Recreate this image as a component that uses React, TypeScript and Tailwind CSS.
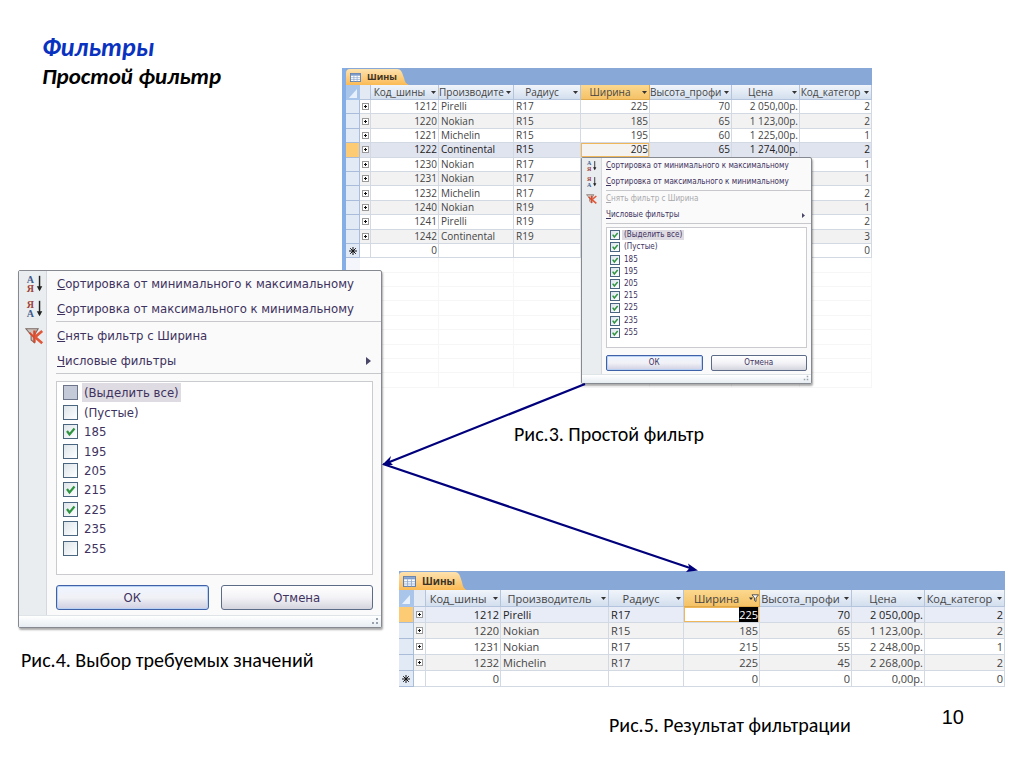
import React from "react";
import clsx from "clsx";

type Tire = {
  id: string;
  maker: string;
  radius: string;
  width: string;
  profile: string;
  price: string;
  category: string;
};

type Size = "small" | "large";

const allTires: Tire[] = [
  { id: "1212", maker: "Pirelli", radius: "R17", width: "225", profile: "70", price: "2 050,00р.", category: "2" },
  { id: "1220", maker: "Nokian", radius: "R15", width: "185", profile: "65", price: "1 123,00р.", category: "2" },
  { id: "1221", maker: "Michelin", radius: "R15", width: "195", profile: "60", price: "1 225,00р.", category: "1" },
  { id: "1222", maker: "Continental", radius: "R15", width: "205", profile: "65", price: "1 274,00р.", category: "2" },
  { id: "1230", maker: "Nokian", radius: "R17", width: "", profile: "", price: "", category: "1" },
  { id: "1231", maker: "Nokian", radius: "R17", width: "", profile: "", price: "", category: "1" },
  { id: "1232", maker: "Michelin", radius: "R17", width: "", profile: "", price: "", category: "2" },
  { id: "1240", maker: "Nokian", radius: "R19", width: "", profile: "", price: "", category: "1" },
  { id: "1241", maker: "Pirelli", radius: "R19", width: "", profile: "", price: "", category: "2" },
  { id: "1242", maker: "Continental", radius: "R19", width: "", profile: "", price: "", category: "3" },
];

const filteredTires: Tire[] = [
  { id: "1212", maker: "Pirelli", radius: "R17", width: "225", profile: "70", price: "2 050,00р.", category: "2" },
  { id: "1220", maker: "Nokian", radius: "R15", width: "185", profile: "65", price: "1 123,00р.", category: "2" },
  { id: "1231", maker: "Nokian", radius: "R17", width: "215", profile: "55", price: "2 248,00р.", category: "1" },
  { id: "1232", maker: "Michelin", radius: "R17", width: "225", profile: "45", price: "2 268,00р.", category: "2" },
];

const filterValues = ["(Выделить все)", "(Пустые)", "185", "195", "205", "215", "225", "235", "255"];

function TableIcon({ className }: { className: string }) {
  return (
    <svg viewBox="0 0 12 10" className={className} aria-hidden="true">
      <rect x="0.5" y="0.5" width="11" height="9" fill="#fff" stroke="#5f7fae" />
      <rect x="1" y="1" width="10" height="2" fill="#7d9ccb" />
      <path d="M1 5.2h10M1 7.3h10M4.2 3v6.5M7.8 3v6.5" stroke="#8fa9d0" strokeWidth="0.8" />
    </svg>
  );
}

function SortIcon({ top, bottom, className }: { top: "А" | "Я"; bottom: "А" | "Я"; className: string }) {
  const color = (c: string) => (c === "А" ? "#3d5a8c" : "#a0423a");
  return (
    <svg viewBox="0 0 18 22" className={className} aria-hidden="true">
      <text x="0" y="10" fontSize="11" fontWeight="bold" fontFamily="Liberation Serif, serif" fill={color(top)}>{top}</text>
      <text x="0" y="20" fontSize="11" fontWeight="bold" fontFamily="Liberation Serif, serif" fill={color(bottom)}>{bottom}</text>
      <path d="M14 2v15" stroke="#222" strokeWidth="1.6" />
      <path d="M11 13.5h6L14 19z" fill="#222" />
    </svg>
  );
}

function ClearFilterIcon({ className }: { className: string }) {
  return (
    <svg viewBox="0 0 18 16" className={className} aria-hidden="true">
      <path d="M.8 1.500h11L8.500 7v7l-3-2.500V7z" fill="#cfc4bd" stroke="#7b6a64" />
      <path d="M8.500 3v11" stroke="#d9492c" strokeWidth="2.200" />
      <path d="M15.500 3.500L9 9l6.500 5.500" fill="none" stroke="#e0583a" strokeWidth="2.400" />
      <path d="M4 5l4.500 4.500" stroke="#d9492c" strokeWidth="1.800" />
    </svg>
  );
}

function HeaderArrow({ label, filtered }: { label: string; filtered?: boolean }) {
  return (
    <button type="button" aria-label={`Фильтр: ${label}`} className="flex w-2.5 shrink-0 justify-center">
      {filtered ? (
        <svg viewBox="0 0 10 8" className="h-2 w-2.5 shrink-0" aria-hidden="true">
          <path d="M0 3.500h4L2 6z" fill="#333" />
          <path d="M3 .8h6.500L7 4v3.500L5.500 6.500V4z" fill="#fff" stroke="#444" strokeWidth=".9" />
        </svg>
      ) : (
        <svg viewBox="0 0 5 3" className="h-[3px] w-[5px]" aria-hidden="true">
          <path d="M0 0h5L2.500 3z" fill="#333" />
        </svg>
      )}
    </button>
  );
}

const columnWidths: Record<Size, string[]> = {
  small: ["w-[14px]", "w-[11px]", "w-[68px]", "w-[75px]", "w-[67px]", "w-[69px]", "w-[82px]", "w-[68px]", "w-[72px]"],
  large: ["w-[15px]", "w-[12px]", "w-[75px]", "w-[108px]", "w-[75px]", "w-[76px]", "w-[92px]", "w-[73px]", "w-[80px]"],
};

type SheetProps = {
  size: Size;
  rows: Tire[];
  current: number;
  makerTitle: string;
  newRow: string[];
  blankRows?: number;
};

function Sheet({ size, rows, current, makerTitle, newRow, blankRows = 0 }: SheetProps) {
  const large = size === "large";
  const titles = ["Код_шины", makerTitle, "Радиус", "Ширина", "Высота_профи", "Цена", "Код_категор"];
  const cell = "overflow-hidden whitespace-nowrap border-r border-b border-[#d3d9e3] px-px py-0";
  const rowHeight = large ? "h-4" : "h-[14px]";

  return (
    <div className="font-['Open_Sans','Noto_Sans',sans-serif] text-[#444]">
      <div className={clsx("flex items-end bg-[#88a9d7]", large ? "h-[19px]" : "h-[17px]")}>
        <button
          type="button"
          className={clsx(
            "flex items-center rounded-tl bg-linear-to-b from-[#fde2ae] to-[#fbba52] font-bold text-[#3b3325]",
            large ? "h-[18px] gap-1.5 pl-1 text-[10px]" : "h-4 gap-1.5 pl-1 text-[9px]",
          )}
        >
          <TableIcon className={large ? "h-[11px] w-[13px]" : "h-[9px] w-[11px]"} />
          Шины
        </button>
        <svg viewBox="0 0 12 16" preserveAspectRatio="none" className={large ? "h-[18px] w-3" : "h-4 w-3"} aria-hidden="true">
          <defs>
            <linearGradient id={`tab-${size}`} x1="0" y1="0" x2="0" y2="1">
              <stop offset="0" stopColor="#fde2ae" />
              <stop offset="1" stopColor="#fbba52" />
            </linearGradient>
          </defs>
          <path d="M0 0C4 0 5 3 7 9C8 13 9 15 12 16H0z" fill={`url(#tab-${size})`} />
        </svg>
      </div>
      <table className={clsx("w-full table-fixed border-separate border-spacing-0", large ? "h-[97px] text-[11px] leading-[15px]" : "h-[303px] text-[10px] leading-[13px]")}>
        <colgroup>
          {columnWidths[size].map((w, i) => (
            <col key={i} className={w} />
          ))}
        </colgroup>
        <thead>
          <tr className={large ? "h-[17px]" : "h-[15px]"}>
            <th className="bg-[#a9c6ea] p-0">
              <svg viewBox="0 0 14 14" className="block h-3.5 w-3.5" aria-hidden="true">
                <path d="M11 3v9H3z" fill="#e8f1fb" />
              </svg>
            </th>
            <th className="border-r border-b border-[#b3c4dc] bg-[#e3eaf4] p-0" />
            {titles.map((title) => (
              <th
                key={title}
                className={clsx(
                  "border-r border-b p-0 font-normal",
                  title === "Ширина"
                    ? "border-[#e0a94a] bg-linear-to-b from-[#fbd88f] to-[#f5c266]"
                    : "border-[#b3c4dc] bg-linear-to-b from-[#f1f5fb] to-[#d3dfee]",
                )}
              >
                <div className="flex items-center">
                  <span className="flex-1 whitespace-nowrap">{title}</span>
                  <HeaderArrow label={title} filtered={large && title === "Ширина"} />
                </div>
              </th>
            ))}
          </tr>
        </thead>
        <tbody>
          {rows.map((row, i) => {
            const selected = i === current;
            return (
              <tr
                key={row.id}
                className={clsx(rowHeight, selected ? (large ? "bg-[#e8ecf7] text-[#222]" : "bg-[#e0e4ef] text-[#222]") : i % 2 === 1 ? "bg-[#f2f2f2]" : "bg-white")}
              >
                <td className={clsx("border-r border-b border-[#a9bcd9] p-0", selected ? "bg-[#fccb74]" : "bg-[#e2eaf6]")} />
                <td className="border-r border-b border-[#d3d9e3] p-0">
                  <button type="button" aria-label="Развернуть" className="mx-auto flex h-[7px] w-[7px] items-center justify-center border border-[#999] bg-white">
                    <svg viewBox="0 0 3 3" className="h-[3px] w-[3px] shrink-0" aria-hidden="true">
                      <path d="M0 1.500h3M1.500 0v3" stroke="#111" />
                    </svg>
                  </button>
                </td>
                <td className={clsx(cell, "text-right")}>{row.id}</td>
                <td className={clsx(cell, "pl-0.5")}>{row.maker}</td>
                <td className={clsx(cell, "pl-0.5")}>{row.radius}</td>
                <td className={clsx(cell, "text-right", selected && (large ? "bg-white" : "bg-[#f5f3f2]"), selected && "shadow-[inset_0_0_0_1px_#efb65a]")}>
                  {selected && large ? <span className="inline-block bg-black text-white">{row.width}</span> : row.width}
                </td>
                <td className={clsx(cell, "text-right")}>{row.profile}</td>
                <td className={clsx(cell, "text-right")}>{row.price}</td>
                <td className={clsx(cell, "text-right")}>{row.category}</td>
              </tr>
            );
          })}
          <tr className={rowHeight}>
            <td className="border-r border-b border-[#a9bcd9] bg-[#e2eaf6] p-0">
              <svg viewBox="0 0 8 8" className="mx-auto block h-2 w-2" aria-hidden="true">
                <path d="M4 0v8M0 4h8M1.200 1.200l5.600 5.600M6.800 1.200L1.200 6.800" stroke="#111" strokeWidth="1" />
              </svg>
            </td>
            <td className={cell} />
            {newRow.map((value, i) => (
              <td key={i} className={clsx(cell, "text-right")}>{value}</td>
            ))}
          </tr>
          {Array.from({ length: blankRows }, (_, i) => (
            <tr key={i} className={rowHeight}>
              <td className="bg-[#f4f6fb] p-0" />
              <td className="border-b border-[#f6f6f6] p-0" />
              {titles.map((title) => (
                <td key={title} className="border-r border-b border-[#f6f6f6] p-0" />
              ))}
            </tr>
          ))}
        </tbody>
      </table>
    </div>
  );
}

const menuStyles = {
  small: {
    root: "text-[8px] leading-[10px]",
    gutter: "w-5",
    item: "h-4 gap-2 pl-1",
    icon: "h-3 w-3 shrink-0",
    sep: "ml-6",
    body: "pl-6 pr-1 pt-[3px]",
    list: "h-[121px] pt-px pl-[3px]",
    values: "h-[110px]",
    label: "gap-0.5",
    box: "size-[10px]",
    buttons: "gap-2 pt-[7px] pb-[3px]",
    button: "h-4 rounded-xs",
    footer: "h-[9px]",
  },
  large: {
    root: "text-[13px] leading-[19px]",
    gutter: "w-7",
    item: "h-[25px] gap-3 pl-1.5",
    icon: "h-5 w-5 shrink-0",
    sep: "ml-[37px] pt-px",
    body: "pl-[37px] pr-2 pt-1.5",
    list: "h-[194px] pt-px pl-1.5",
    values: "h-[175px]",
    label: "gap-1",
    box: "size-[15px]",
    buttons: "gap-3 pt-[10px] pb-[5px]",
    button: "h-[25px] rounded-[3px]",
    footer: "h-3",
  },
};

function MenuText({ text }: { text: string }) {
  return (
    <span className="whitespace-nowrap">
      <span className="underline">{text[0]}</span>
      {text.slice(1)}
    </span>
  );
}

type FilterMenuProps = {
  size: Size;
  checked: string[];
  clearDisabled?: boolean;
};

function FilterMenu({ size, checked, clearDisabled }: FilterMenuProps) {
  const s = menuStyles[size];
  return (
    <form
      className={clsx(
        "relative flex flex-col rounded-xs border border-[#868a90] bg-[#fafafa] font-['DejaVu_Sans_Condensed','DejaVu_Sans',sans-serif] text-[#3e3260] shadow-[1px_2px_2px_#0005]",
        s.root,
      )}
      onSubmit={(e) => e.preventDefault()}
    >
      <div className={clsx("absolute inset-y-0 left-0 border-r border-[#d5d9dd] bg-[#e9edef]", s.gutter)} />
      <div className="relative">
        <button type="button" className={clsx("flex w-full items-center", s.item)}>
          <SortIcon top="А" bottom="Я" className={s.icon} />
          <MenuText text="Сортировка от минимального к максимальному" />
        </button>
        <button type="button" className={clsx("flex w-full items-center", s.item)}>
          <SortIcon top="Я" bottom="А" className={s.icon} />
          <MenuText text="Сортировка от максимального к минимальному" />
        </button>
        <div className={clsx("border-t border-[#c6c8cb]", s.sep)} />
        <button type="button" className={clsx("flex w-full items-center", s.item, clearDisabled && "text-[#a9a9ad]")}>
          <ClearFilterIcon className={s.icon} />
          <MenuText text="Снять фильтр с Ширина" />
        </button>
        <button type="button" className={clsx("flex w-full items-center", s.item)}>
          <span className={s.icon} />
          <MenuText text="Числовые фильтры" />
          <svg viewBox="0 0 5 8" className={clsx("ml-auto", size === "large" ? "mr-2.5 h-2 w-[5px]" : "mr-1.5 h-[5px] w-[3px]")} aria-hidden="true">
            <path d="M0 0l5 4-5 4z" fill="#4a4668" />
          </svg>
        </button>
        <div className={clsx("border-t border-[#c6c8cb]", s.sep)} />
        <div className={s.body}>
          <div className={clsx("border border-[#c9cbcf] bg-white", s.list)}>
            <div className={clsx("flex flex-col", s.values)}>
              {filterValues.map((value, i) => (
                <label key={value} className={clsx("flex flex-1 items-center self-start", s.label)}>
                  <span className="grid">
                    <input
                      type="checkbox"
                      defaultChecked={checked.includes(value)}
                      className={clsx(
                        "peer col-start-1 row-start-1 appearance-none border",
                        s.box,
                        i === 0 && size === "large"
                          ? "border-[#6b7488] bg-[#c5cad8]"
                          : "border-[#4a6580] bg-linear-to-br from-[#dde5ea] to-white",
                      )}
                    />
                    <svg viewBox="0 0 15 15" className={clsx("pointer-events-none invisible col-start-1 row-start-1 peer-checked:visible", s.box)} aria-hidden="true">
                      <path d="M4 7l2.500 3.500L11.500 4.500" fill="none" stroke="#2f9440" strokeWidth="2.200" />
                    </svg>
                  </span>
                  <span className={clsx("px-0.5", i === 0 && "bg-[#dfdbe2]")}>{value}</span>
                </label>
              ))}
            </div>
          </div>
          <div className={clsx("flex", s.buttons)}>
            <button type="submit" className={clsx("flex flex-1 items-center justify-center border border-[#3f61a8] bg-linear-to-b from-[#eef5ff] via-[#f1f1f6] to-[#cfcfe2] shadow-[inset_0_0_0_1px_#b9d2f3]", s.button)}>
              ОК
            </button>
            <button type="button" className={clsx("flex flex-1 items-center justify-center border border-[#5c6b88] bg-linear-to-b from-white via-[#f3f3f7] to-[#d4d4de]", s.button)}>
              Отмена
            </button>
          </div>
        </div>
      </div>
      <div className={clsx("relative flex items-end justify-end border-t border-[#dfe4e8] bg-linear-to-b from-white to-[#e6edf2] p-0.5", s.footer)}>
        <svg viewBox="0 0 8 8" className={size === "large" ? "h-2 w-2" : "h-[6px] w-[6px]"} aria-hidden="true">
          <path d="M5 1h2v2H5zM5 5h2v2H5zM1 5h2v2H1z" fill="#98a2ad" />
        </svg>
      </div>
    </form>
  );
}

function Arrows() {
  return (
    <svg viewBox="0 0 320 200" className="pointer-events-none absolute top-[380px] left-0 h-[200px] w-[320px]" aria-hidden="true">
      <g stroke="#00007c" strokeWidth="2.200" fill="none">
        <path d="M203 4L5 83" />
        <path d="M1 84L311 189" />
      </g>
      <path d="M0 85l9-9-1.500 5.500L11 85z" fill="#00007c" />
      <path d="M316 190.500l-10-7 1.500 4.500-3.500 4z" fill="#00007c" />
    </svg>
  );
}

export default function App() {
  return (
    <main className="flex min-h-screen bg-white font-[Carlito,Calibri,'Open_Sans',sans-serif] text-xl leading-6 text-black">
      <section className="relative z-10 w-[382px] shrink-0 pt-[33px] pl-[18px]">
        <h1 className="pl-6 text-[26px] leading-7 font-bold text-[#0a32c0] italic">Фильтры</h1>
        <h2 className="pl-6 text-[23px] leading-[30px] font-bold italic">Простой фильтр</h2>
        <figure className="mt-[179px]">
          <FilterMenu size="large" checked={["185", "215", "225"]} />
          <figcaption className="mt-5 pl-[3px]">Рис.4. Выбор требуемых значений</figcaption>
        </figure>
      </section>

      <section className="relative min-w-0 flex-1 pt-[68px]">
        <figure>
          <div className="relative mr-[152px] -ml-10 h-[326px] border-l-4 border-[#85aee6]">
            <Sheet
              size="small"
              rows={allTires}
              current={3}
              makerTitle="Производите"
              newRow={["0", "", "", "", "", "", "0"]}
              blankRows={9}
            />
            <div className="absolute top-[89px] left-[235px] w-[231px]">
              <FilterMenu size="small" checked={filterValues} clearDisabled />
            </div>
          </div>
          <figcaption className="mt-7 pl-[132px]">Рис.3. Простой фильтр</figcaption>
        </figure>

        <figure className="mt-[125px]">
          <div className="mr-[19px] ml-[17px]">
            <Sheet
              size="large"
              rows={filteredTires}
              current={0}
              makerTitle="Производитель"
              newRow={["0", "", "", "0", "0", "0,00р.", "0"]}
            />
          </div>
          <div className="mt-[18px] mr-[60px] flex items-start justify-between pl-[227px]">
            <figcaption className="pt-2">Рис.5. Результат фильтрации</figcaption>
            <span className="font-['Liberation_Sans',sans-serif] text-xl leading-6">10</span>
          </div>
        </figure>
        <Arrows />
      </section>
    </main>
  );
}
